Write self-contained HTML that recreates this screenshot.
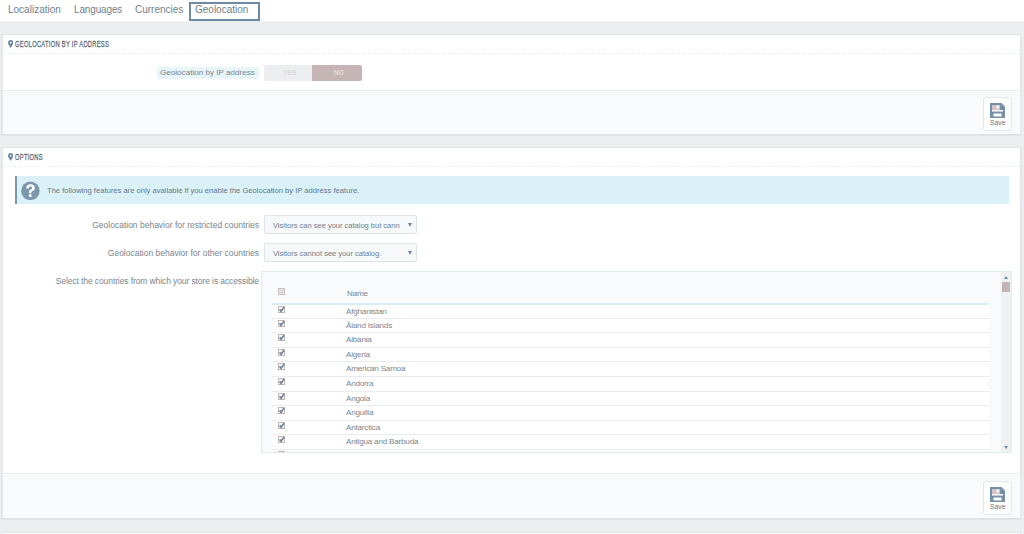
<!DOCTYPE html>
<html><head><meta charset="utf-8">
<style>
*{box-sizing:border-box;margin:0;padding:0}
html,body{width:1024px;height:534px;overflow:hidden;background:#eceef0;font-family:"Liberation Sans",sans-serif;color:#6f7c88}
.abs{position:absolute}
#topnav{position:absolute;left:0;top:0;width:1024px;height:21px;background:#fff}
.tab{position:absolute;top:3px;font-size:10px;line-height:14px;color:#727f8c;white-space:nowrap}
#geo{position:absolute;left:189px;top:2px;width:71px;height:19px;border:2px solid #6d8ba4}
.panel{position:absolute;left:1px;width:1021px;background:#fff;border:1px solid #e0e3e6;border-left:2px solid #e5e8eb;border-right:2px solid #e5e8eb;border-radius:2px;box-shadow:0 1px 0 #e0e3e6;overflow:hidden}
.ph{position:absolute;left:0;top:0;width:100%;height:19px;border-bottom:1px dashed #eceff1}
.pht{position:absolute;left:11.5px;top:3.5px;font-size:9.3px;line-height:10px;font-weight:normal;color:#5f6d7a;white-space:nowrap;transform-origin:0 0;transform:scaleX(0.62);letter-spacing:0.45px;-webkit-text-stroke:0.3px #5f6d7a}
.pin{position:absolute;left:6px;top:5px;width:5px;height:8px}
.footer{position:absolute;left:0;width:100%;background:#f9fafb;border-top:1px solid #eceef0}
.save{position:absolute;width:29px;height:34px;background:#fff;border:1px solid #e4e8eb;border-radius:3px}
.save svg{position:absolute;left:6px;top:4.5px}
.save span{position:absolute;left:6px;top:21px;font-size:6.8px;line-height:8px;color:#76737a}
.lbl{position:absolute;font-size:8.5px;line-height:10px;color:#7a848e;white-space:nowrap;text-align:right}
.sel{position:absolute;left:261px;width:153px;height:19px;background:#f6f8f9;border:1px solid #dfe4e7;border-radius:2px}
.sel span{position:absolute;left:8px;top:4.5px;font-size:7.5px;line-height:10px;color:#737e88;white-space:nowrap}
.sel i{position:absolute;right:4.5px;top:6.5px;width:0;height:0;border-left:2px solid transparent;border-right:2px solid transparent;border-top:4px solid #6a87a2}
.row{background:#fff}
.nm{font-size:8.1px;line-height:10px;color:#7a8590;white-space:nowrap;letter-spacing:-0.2px}
</style></head><body>
<div id="topnav">
  <div class="tab" style="left:8px">Localization</div>
  <div class="tab" style="left:74px;letter-spacing:-0.15px">Languages</div>
  <div class="tab" style="left:135px">Currencies</div>
  <div id="geo"></div>
  <div class="tab" style="left:195px">Geolocation</div>
</div>

<!-- Panel 1 -->
<div class="panel" style="top:34px;height:101px">
  <div class="ph">
    <svg class="pin" viewBox="0 0 11 16" style="left:4.8px;top:4.8px;width:5.3px;height:7.8px"><path d="M5.5 0C2.5 0 0 2.4 0 5.5 0 9 5.5 16 5.5 16S11 9 11 5.5C11 2.4 8.5 0 5.5 0zm0 7.3a1.8 1.8 0 1 1 0-3.6 1.8 1.8 0 0 1 0 3.6z" fill="#6a89a5"/></svg>
    <div class="pht">GEOLOCATION BY IP ADDRESS</div>
  </div>
  <div class="abs" style="left:154px;top:32px;width:102px;height:12px;background:#e8f6fa"></div>
  <div class="lbl" style="left:157px;top:33px;font-size:8.1px">Geolocation by IP address</div>
  <div class="abs" style="left:261px;top:30px;width:98px;height:16px;border-radius:2px;overflow:hidden">
    <div class="abs" style="left:0;top:0;width:48px;height:16px;background:#eceef0"></div>
    <div class="abs" style="left:48px;top:0;width:50px;height:16px;background:#c5b5b5"></div>
    <div class="abs" style="left:19px;top:4px;font-size:6.3px;line-height:8px;color:#d6cdcd;letter-spacing:0.3px">YES</div>
    <div class="abs" style="left:70px;top:4px;font-size:6.3px;line-height:8px;color:#f4f0f0;letter-spacing:0.3px">NO</div>
  </div>
  <div class="footer" style="top:55px;height:45px">
    <div class="save" style="left:980px;top:6px">
      <svg width="15" height="15" viewBox="0 0 15 15"><path d="M0 0h11.5l3.5 3.5V15H0z" fill="#7590a8"/><path d="M2 2h8v5H2z" fill="#d3c4c4"/><rect x="6.5" y="2.5" width="2.2" height="3" fill="#fff"/><rect x="2" y="7" width="11" height="1.6" fill="#f4f4f4"/><rect x="3.5" y="10.5" width="8" height="3" fill="#fff"/></svg>
      <span>Save</span>
    </div>
  </div>
</div>

<!-- Panel 2 -->
<div class="panel" style="top:147px;height:372px">
  <div class="ph">
    <svg class="pin" viewBox="0 0 11 16" style="left:4.8px;top:4.8px;width:5.3px;height:7.8px"><path d="M5.5 0C2.5 0 0 2.4 0 5.5 0 9 5.5 16 5.5 16S11 9 11 5.5C11 2.4 8.5 0 5.5 0zm0 7.3a1.8 1.8 0 1 1 0-3.6 1.8 1.8 0 0 1 0 3.6z" fill="#6a89a5"/></svg>
    <div class="pht">OPTIONS</div>
  </div>
  <div class="abs" style="left:12px;top:28px;width:994px;height:28px;background:#dbf1f8;border-left:2px solid #7b95ab"></div>
  <svg class="abs" style="left:18px;top:33px" width="19" height="19" viewBox="0 0 19 19"><circle cx="9.4" cy="9.8" r="9.3" fill="#7d97ad"/><path d="M5.2 7.4C5.2 4.8 7.1 3.3 9.5 3.3c2.5 0 4.3 1.5 4.3 3.6 0 1.8-1.2 2.6-2.5 3.3-.7.4-.9.8-.9 1.5v.6H7.9v-.9c0-1.4.7-2.2 1.7-2.8 1-.6 1.5-1 1.5-1.8 0-.8-.7-1.3-1.6-1.3-1.1 0-1.7.7-1.7 1.9zM7.9 13.3h2.6v2.6H7.9z" fill="#fff"/></svg>
  <div class="abs" style="left:44px;top:37.5px;font-size:7.6px;line-height:10px;color:#62778b;white-space:nowrap">The following features are only available if you enable the Geolocation by IP address feature.</div>

  <div class="lbl" style="right:761px;top:72px">Geolocation behavior for restricted countries</div>
  <div class="sel" style="top:67px"><span>Visitors can see your catalog but cann</span><i></i></div>
  <div class="lbl" style="right:761px;top:100px">Geolocation behavior for other countries</div>
  <div class="sel" style="top:95px"><span>Visitors cannot see your catalog.</span><i></i></div>
  <div class="lbl" style="right:761px;top:128px;letter-spacing:-0.1px">Select the countries from which your store is accessible</div>

  <div class="abs" id="well" style="left:258px;top:123px;width:751px;height:182px;background:#f9fafb;border:1px solid #e1ebef;overflow:hidden">
<div class="abs" style="left:0;top:0;width:739px;height:31px;background:#f9fafb"></div>
<svg class="abs" style="left:16px;top:16px" width="7" height="7"><rect x="0.5" y="0.5" width="6" height="6" fill="#e6e3e4" stroke="#cbbfbf"/><path d="M2 2h3v3H2z" fill="#d5dce2"/></svg>
<div class="abs nm" style="left:85px;top:17.0px">Name</div>
<div class="abs" style="left:10px;top:31px;width:717px;height:2px;background:#d6edf4"></div>
<div class="abs row" style="left:10px;top:33px;width:717px;height:13px"></div>
<svg class="abs" style="left:16px;top:34px" width="7" height="7"><rect x="0.5" y="0.5" width="6" height="6" fill="#fff" stroke="#c4b3b3"/><path d="M1.6 3.4l1.5 1.9 3-4.2" fill="none" stroke="#6a87a2" stroke-width="1.7"/></svg>
<div class="abs nm" style="left:84px;top:34.5px">Afghanistan</div>
<div class="abs" style="left:10px;top:46px;width:717px;height:1px;background:#e8ecef"></div>
<div class="abs row" style="left:10px;top:47px;width:717px;height:13px"></div>
<svg class="abs" style="left:16px;top:48px" width="7" height="7"><rect x="0.5" y="0.5" width="6" height="6" fill="#fff" stroke="#c4b3b3"/><path d="M1.6 3.4l1.5 1.9 3-4.2" fill="none" stroke="#6a87a2" stroke-width="1.7"/></svg>
<div class="abs nm" style="left:84px;top:48.5px">Åland Islands</div>
<div class="abs" style="left:10px;top:60px;width:717px;height:1px;background:#e8ecef"></div>
<div class="abs row" style="left:10px;top:61px;width:717px;height:14px"></div>
<svg class="abs" style="left:16px;top:62px" width="7" height="7"><rect x="0.5" y="0.5" width="6" height="6" fill="#fff" stroke="#c4b3b3"/><path d="M1.6 3.4l1.5 1.9 3-4.2" fill="none" stroke="#6a87a2" stroke-width="1.7"/></svg>
<div class="abs nm" style="left:84px;top:62.5px">Albania</div>
<div class="abs" style="left:10px;top:75px;width:717px;height:1px;background:#e8ecef"></div>
<div class="abs row" style="left:10px;top:76px;width:717px;height:13px"></div>
<svg class="abs" style="left:16px;top:77px" width="7" height="7"><rect x="0.5" y="0.5" width="6" height="6" fill="#fff" stroke="#c4b3b3"/><path d="M1.6 3.4l1.5 1.9 3-4.2" fill="none" stroke="#6a87a2" stroke-width="1.7"/></svg>
<div class="abs nm" style="left:84px;top:77.5px">Algeria</div>
<div class="abs" style="left:10px;top:89px;width:717px;height:1px;background:#e8ecef"></div>
<div class="abs row" style="left:10px;top:90px;width:717px;height:14px"></div>
<svg class="abs" style="left:16px;top:91px" width="7" height="7"><rect x="0.5" y="0.5" width="6" height="6" fill="#fff" stroke="#c4b3b3"/><path d="M1.6 3.4l1.5 1.9 3-4.2" fill="none" stroke="#6a87a2" stroke-width="1.7"/></svg>
<div class="abs nm" style="left:84px;top:91.5px">American Samoa</div>
<div class="abs" style="left:10px;top:104px;width:717px;height:1px;background:#e8ecef"></div>
<div class="abs row" style="left:10px;top:105px;width:717px;height:14px"></div>
<svg class="abs" style="left:16px;top:106px" width="7" height="7"><rect x="0.5" y="0.5" width="6" height="6" fill="#fff" stroke="#c4b3b3"/><path d="M1.6 3.4l1.5 1.9 3-4.2" fill="none" stroke="#6a87a2" stroke-width="1.7"/></svg>
<div class="abs nm" style="left:84px;top:106.5px">Andorra</div>
<div class="abs" style="left:10px;top:119px;width:717px;height:1px;background:#e8ecef"></div>
<div class="abs row" style="left:10px;top:120px;width:717px;height:13px"></div>
<svg class="abs" style="left:16px;top:121px" width="7" height="7"><rect x="0.5" y="0.5" width="6" height="6" fill="#fff" stroke="#c4b3b3"/><path d="M1.6 3.4l1.5 1.9 3-4.2" fill="none" stroke="#6a87a2" stroke-width="1.7"/></svg>
<div class="abs nm" style="left:84px;top:121.5px">Angola</div>
<div class="abs" style="left:10px;top:133px;width:717px;height:1px;background:#e8ecef"></div>
<div class="abs row" style="left:10px;top:134px;width:717px;height:14px"></div>
<svg class="abs" style="left:16px;top:135px" width="7" height="7"><rect x="0.5" y="0.5" width="6" height="6" fill="#fff" stroke="#c4b3b3"/><path d="M1.6 3.4l1.5 1.9 3-4.2" fill="none" stroke="#6a87a2" stroke-width="1.7"/></svg>
<div class="abs nm" style="left:84px;top:135.5px">Anguilla</div>
<div class="abs" style="left:10px;top:148px;width:717px;height:1px;background:#e8ecef"></div>
<div class="abs row" style="left:10px;top:149px;width:717px;height:13px"></div>
<svg class="abs" style="left:16px;top:150px" width="7" height="7"><rect x="0.5" y="0.5" width="6" height="6" fill="#fff" stroke="#c4b3b3"/><path d="M1.6 3.4l1.5 1.9 3-4.2" fill="none" stroke="#6a87a2" stroke-width="1.7"/></svg>
<div class="abs nm" style="left:84px;top:150.5px">Antarctica</div>
<div class="abs" style="left:10px;top:162px;width:717px;height:1px;background:#e8ecef"></div>
<div class="abs row" style="left:10px;top:163px;width:717px;height:14px"></div>
<svg class="abs" style="left:16px;top:164px" width="7" height="7"><rect x="0.5" y="0.5" width="6" height="6" fill="#fff" stroke="#c4b3b3"/><path d="M1.6 3.4l1.5 1.9 3-4.2" fill="none" stroke="#6a87a2" stroke-width="1.7"/></svg>
<div class="abs nm" style="left:84px;top:164.5px">Antigua and Barbuda</div>
<div class="abs" style="left:10px;top:177px;width:717px;height:1px;background:#e8ecef"></div>
<div class="abs row" style="left:10px;top:178px;width:717px;height:14px"></div>
<svg class="abs" style="left:16px;top:179px" width="7" height="7"><rect x="0.5" y="0.5" width="6" height="6" fill="#fff" stroke="#c4b3b3"/><path d="M1.6 3.4l1.5 1.9 3-4.2" fill="none" stroke="#6a87a2" stroke-width="1.7"/></svg>
<div class="abs nm" style="left:84px;top:179.5px">Argentina</div>
<div class="abs" style="left:10px;top:192px;width:717px;height:1px;background:#e8ecef"></div>
<div class="abs" style="left:739px;top:0;width:10px;height:181px;background:#eff1f3"></div>
<div class="abs" style="left:742px;top:4px;width:0;height:0;border-left:2.5px solid transparent;border-right:2.5px solid transparent;border-bottom:3px solid #6f8ba5"></div>
<div class="abs" style="left:740px;top:10px;width:8px;height:10px;background:#c4b4b4"></div>
<div class="abs" style="left:742px;top:174px;width:0;height:0;border-left:2.5px solid transparent;border-right:2.5px solid transparent;border-top:3px solid #6f8ba5"></div>
  </div>

  <div class="footer" style="top:325px;height:45px">
    <div class="save" style="left:980px;top:7px">
      <svg width="15" height="15" viewBox="0 0 15 15"><path d="M0 0h11.5l3.5 3.5V15H0z" fill="#7590a8"/><path d="M2 2h8v5H2z" fill="#d3c4c4"/><rect x="6.5" y="2.5" width="2.2" height="3" fill="#fff"/><rect x="2" y="7" width="11" height="1.6" fill="#f4f4f4"/><rect x="3.5" y="10.5" width="8" height="3" fill="#fff"/></svg>
      <span>Save</span>
    </div>
  </div>
</div>

<div class="panel" style="top:532px;height:10px"></div>
</body></html>
